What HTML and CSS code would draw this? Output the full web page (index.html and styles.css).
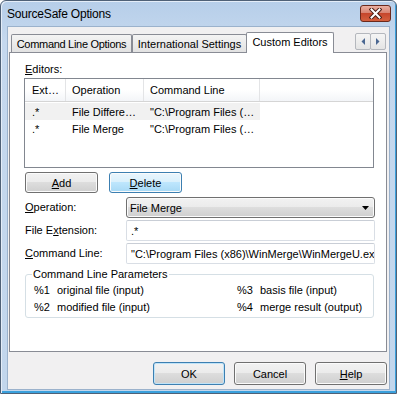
FILE: index.html
```html
<!DOCTYPE html>
<html lang="en">
<head>
  <meta charset="UTF-8">
  <title>SourceSafe Options</title>
  <link rel="stylesheet" href="styles.css">
</head>
<body>
  <div class="window">
    <div class="titlebar">
      <span class="title">SourceSafe Options</span>
      <div class="close-btn">
        <svg width="13" height="11" viewBox="0 0 13 11">
          <path d="M2.5 1.5 L10.5 9.5 M10.5 1.5 L2.5 9.5" stroke="#4a1d14" stroke-width="4" stroke-linecap="square"/>
          <path d="M2.5 1.5 L10.5 9.5 M10.5 1.5 L2.5 9.5" stroke="#ffffff" stroke-width="2" stroke-linecap="square"/>
        </svg>
      </div>
    </div>

    <div class="client">
      <div class="tabstrip">
        <div class="tab tab-cmd">Command Line Options</div>
        <div class="tab tab-intl">International Settings</div>
        <div class="tab tab-custom active">Custom Editors</div>
        <div class="tab-scroll">
          <span class="scroll-btn">
            <svg width="4" height="7" viewBox="0 0 4 7"><polygon points="4,0 4,7 0.5,3.5" fill="#4a6791"/></svg>
          </span>
          <span class="scroll-btn">
            <svg width="4" height="7" viewBox="0 0 4 7"><polygon points="0,0 0,7 3.5,3.5" fill="#4a6791"/></svg>
          </span>
        </div>
      </div>

      <div class="tab-panel">
        <div class="label"><u>E</u>ditors:</div>

        <div class="listview">
          <div class="lv-header">
            <div class="col col-ext">Ext…</div>
            <div class="col col-op">Operation</div>
            <div class="col col-cmd">Command Line</div>
          </div>
          <div class="lv-row hot">
            <div class="cell col-ext">.*</div>
            <div class="cell col-op">File Differe…</div>
            <div class="cell col-cmd">"C:\Program Files (…</div>
          </div>
          <div class="lv-row">
            <div class="cell col-ext">.*</div>
            <div class="cell col-op">File Merge</div>
            <div class="cell col-cmd">"C:\Program Files (…</div>
          </div>
        </div>

        <div class="button-row">
          <div class="btn"><u>A</u>dd</div>
          <div class="btn hot"><u>D</u>elete</div>
        </div>

        <div class="form-grid">
          <div class="label"><u>O</u>peration:</div>
          <div class="combo">
            <span>File Merge</span>
            <svg width="7" height="4" viewBox="0 0 7 4"><polygon points="0,0 7,0 3.5,4" fill="#000"/></svg>
          </div>
          <div class="label">File E<u>x</u>tension:</div>
          <div class="textbox">.*</div>
          <div class="label"><u>C</u>ommand Line:</div>
          <div class="textbox">"C:\Program Files (x86)\WinMerge\WinMergeU.exe" %1 %2</div>
        </div>

        <fieldset class="params">
          <legend>Command Line Parameters</legend>
          <div class="params-grid">
            <span>%1</span><span>original file (input)</span>
            <span>%3</span><span>basis file (input)</span>
            <span>%2</span><span>modified file (input)</span>
            <span>%4</span><span>merge result (output)</span>
          </div>
        </fieldset>
      </div>

      <div class="dialog-buttons">
        <div class="btn wide default">OK</div>
        <div class="btn wide">Cancel</div>
        <div class="btn wide"><u>H</u>elp</div>
      </div>
    </div>
  </div>
</body>
</html>
```

FILE: styles.css
```css
body {
  margin: 0;
  font-family: "Liberation Sans", Arial, sans-serif;
  font-size: 11px;
  color: #000;
}

.window {
  width: 397px;
  height: 394px;
  box-sizing: border-box;
  display: flex;
  flex-direction: column;
  padding: 0 6px 3px;
  border: 1px solid #4f6177;
  border-radius: 6px 6px 0 0;
  background: linear-gradient(#b6cee9, #c5d8ee 40px, #c2d6ec);
  box-shadow: inset 1px 1px 0 #e4edf8, inset -1px -2px 0 #3aa0dc;
}

.titlebar {
  height: 25px;
  flex-shrink: 0;
  display: flex;
  align-items: center;
  justify-content: space-between;
}

.title {
  font-size: 12px;
  letter-spacing: -0.2px;
}

.close-btn {
  width: 31px;
  height: 17px;
  margin-right: -1px;
  box-sizing: border-box;
  border: 1px solid #6b291c;
  border-radius: 3px;
  background: linear-gradient(#eab0a2, #d98472 45%, #c6462c 50%, #d4603f);
  display: flex;
  align-items: center;
  justify-content: center;
}

.client {
  flex: 1;
  display: flex;
  flex-direction: column;
  background: #f1f0f1;
  border: 1px solid #9bb2cc;
}

/* tabs */
.tabstrip {
  display: flex;
  align-items: flex-end;
  height: 21px;
  margin-top: 5px;
  padding: 0 3px;
}

.tab {
  height: 18px;
  margin-bottom: 1px;
  box-sizing: border-box;
  border: 1px solid #898c95;
  border-bottom: none;
  border-radius: 2px 2px 0 0;
  background: linear-gradient(#f4f4f4, #e2e2e2);
  display: flex;
  align-items: center;
  justify-content: center;
  white-space: nowrap;
}

.tab-cmd { width: 121px; letter-spacing: -0.3px; }
.tab-intl { width: 115px; }

.tab.active {
  width: 88px;
  height: 21px;
  margin-bottom: 0;
  margin-left: -1px;
  padding-bottom: 2px;
  background: #fff;
  position: relative;
  z-index: 1;
}

.tab-scroll {
  margin-left: auto;
  align-self: flex-start;
  margin-top: 1px;
  display: flex;
}

.scroll-btn {
  width: 16px;
  height: 17px;
  box-sizing: border-box;
  border: 1px solid #b4b7bd;
  border-radius: 2px;
  background: linear-gradient(#f5f5f5, #e4e4e4);
  display: flex;
  align-items: center;
  justify-content: center;
}

.scroll-btn + .scroll-btn {
  margin-left: -1px;
}

.tab-panel {
  margin: -1px 2px 0 1px;
  height: 300px;
  box-sizing: border-box;
  border: 1px solid #898c95;
  background: #fff;
  padding: 10px 12px 0 15px;
}

.label {
  line-height: 13px;
  white-space: nowrap;
}

/* list view */
.listview {
  margin: 2px 0 0 -1px;
  width: 350px;
  height: 90px;
  box-sizing: border-box;
  border: 1px solid #828790;
}

.lv-header {
  display: flex;
  height: 23px;
  box-sizing: border-box;
  margin-bottom: 1px;
  border-bottom: 1px solid #d5d5d5;
  background: linear-gradient(#fff 50%, #f3f5f8);
}

.col,
.cell {
  box-sizing: border-box;
  padding-left: 6px;
  display: flex;
  align-items: center;
  white-space: nowrap;
  overflow: hidden;
}

.col {
  border-right: 1px solid #e3e4e6;
}

.col-ext { width: 41px; padding-left: 7px; }
.col-op { width: 78px; }
.col-cmd { width: 116px; }

.lv-row {
  display: flex;
  height: 17px;
}

.lv-row.hot .cell {
  background: #f1f1f1;
}

/* buttons */
.button-row {
  display: flex;
  gap: 11px;
  margin-top: 4px;
}

.btn {
  width: 73px;
  height: 21px;
  box-sizing: border-box;
  border: 1px solid #707070;
  border-radius: 3px;
  background: linear-gradient(#f2f2f2, #ebebeb 49%, #dddddd 50%, #cfcfcf);
  box-shadow: inset 0 0 0 1px #fbfbfb;
  display: flex;
  align-items: center;
  justify-content: center;
}

.btn.hot {
  border-color: #3c7fb1;
  background: linear-gradient(#eaf6fd, #d9f0fc 49%, #bee6fd 50%, #a7d9f5);
}

/* form */
.form-grid {
  display: grid;
  grid-template-columns: 101px 249px;
  grid-auto-rows: 21px;
  row-gap: 2px;
  align-items: center;
  margin-top: 4px;
}

.combo {
  height: 21px;
  box-sizing: border-box;
  border: 1px solid #707070;
  border-radius: 3px;
  background: linear-gradient(#f2f2f2, #ebebeb 49%, #dddddd 50%, #cfcfcf);
  box-shadow: inset 0 0 0 1px #fbfbfb;
  display: flex;
  align-items: center;
  justify-content: space-between;
  padding: 0 5px 0 3px;
}

.textbox {
  height: 21px;
  box-sizing: border-box;
  border: 1px solid #d9dee5;
  border-top-color: #c9ced6;
  border-radius: 2px;
  background: #fff;
  padding-left: 4px;
  display: flex;
  align-items: center;
  white-space: nowrap;
  overflow: hidden;
}

/* group box */
.params {
  margin: 4px 0 0;
  min-width: 0;
  padding: 1px 6px 1px;
  border: 1px solid #d5dfe5;
  border-radius: 3px;
}

.params legend {
  padding: 0 1px;
  line-height: 13px;
}

.params-grid {
  display: grid;
  grid-template-columns: 23px 180px 23px auto;
  line-height: 17px;
  margin-left: 2px;
  white-space: nowrap;
}

/* dialog buttons */
.dialog-buttons {
  display: flex;
  justify-content: flex-end;
  gap: 9px;
  margin-top: 10px;
  padding-right: 2px;
}

.btn.wide {
  width: 72px;
  height: 23px;
}

.btn.default {
  border-color: #3c7fb1;
  box-shadow: inset 0 0 0 1px #bfe3f8;
}
```
